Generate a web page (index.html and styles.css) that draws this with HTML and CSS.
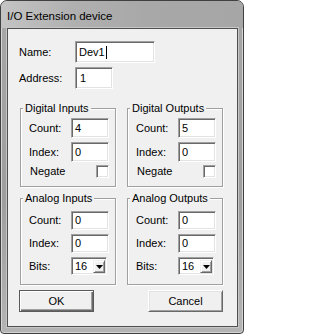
FILE: index.html
```html
<!DOCTYPE html>
<html>
<head>
<meta charset="utf-8">
<title>I/O Extension device</title>
<link rel="stylesheet" href="styles.css">
</head>
<body>
<div class="window">
  <div class="titlebar"><span class="title">I/O Extension device</span></div>
  <div class="client">
    <div class="top-fields">
      <span class="lbl">Name:</span>
      <div class="edit name">Dev1<span class="caret"></span></div>
      <span class="lbl">Address:</span>
      <div class="edit addr">1</div>
    </div>
    <div class="groups">
      <fieldset class="group digital">
        <legend>Digital Inputs</legend>
        <div class="row"><span class="lbl">Count:</span><div class="edit small">4</div></div>
        <div class="row"><span class="lbl">Index:</span><div class="edit small">0</div></div>
        <div class="row check"><span class="lbl neg">Negate</span><div class="checkbox"></div></div>
      </fieldset>
      <fieldset class="group digital">
        <legend>Digital Outputs</legend>
        <div class="row"><span class="lbl">Count:</span><div class="edit small">5</div></div>
        <div class="row"><span class="lbl">Index:</span><div class="edit small">0</div></div>
        <div class="row check"><span class="lbl neg">Negate</span><div class="checkbox"></div></div>
      </fieldset>
      <fieldset class="group analog">
        <legend>Analog Inputs</legend>
        <div class="row"><span class="lbl">Count:</span><div class="edit small">0</div></div>
        <div class="row"><span class="lbl">Index:</span><div class="edit small">0</div></div>
        <div class="row combo-row"><span class="lbl">Bits:</span>
          <div class="combo"><span class="combo-text">16</span><span class="drop"><svg width="7" height="4" viewBox="0 0 7 4"><polygon points="0,0 7,0 3.5,4" fill="#000"/></svg></span></div>
        </div>
      </fieldset>
      <fieldset class="group analog">
        <legend>Analog Outputs</legend>
        <div class="row"><span class="lbl">Count:</span><div class="edit small">0</div></div>
        <div class="row"><span class="lbl">Index:</span><div class="edit small">0</div></div>
        <div class="row combo-row"><span class="lbl">Bits:</span>
          <div class="combo"><span class="combo-text">16</span><span class="drop"><svg width="7" height="4" viewBox="0 0 7 4"><polygon points="0,0 7,0 3.5,4" fill="#000"/></svg></span></div>
        </div>
      </fieldset>
    </div>
    <div class="buttons">
      <div class="btn default">OK</div>
      <div class="btn">Cancel</div>
    </div>
  </div>
</div>
</body>
</html>
```
FILE: styles.css
```css
html, body {
  margin: 0;
  padding: 0;
}
body {
  width: 244px;
  height: 334px;
  overflow: hidden;
  background: #ffffff;
  font-family: "Liberation Sans", Arial, sans-serif;
  font-size: 11px;
  color: #000;
}
.window {
  box-sizing: border-box;
  width: 244px;
  height: 334px;
  border: 1px solid #404040;
  border-radius: 7px 7px 4px 4px;
  background: linear-gradient(to bottom, #b0b0b0 0px, #a6a6a6 28px, #9e9e9e 60%, #b4b4b4 100%);
  box-shadow: inset 0 0 0 1px #d4d4d4;
  display: flex;
  flex-direction: column;
  padding: 0 5px 6px 6px;
  overflow: hidden;
}
.titlebar {
  height: 27px;
  flex: none;
  box-sizing: border-box;
  display: flex;
  align-items: center;
  padding: 2px 0 0 0;
  margin: 0 -5px 0 -6px;
  padding-left: 6px;
  background: linear-gradient(to right, #c4c4c4 0%, #b0b0b0 30%, #a8a8a8 60%, #a6a6a6 100%);
  border-radius: 6px 6px 0 0;
}
.title {
  font-size: 11.5px;
  line-height: 14px;
  color: #000;
}
.client {
  flex: 1;
  border: 1px solid #505050;
  background: #f0f0f0;
  box-shadow: 0 0 0 1px #c6c6c6;
  display: flex;
  flex-direction: column;
  min-height: 0;
}
.top-fields {
  display: grid;
  grid-template-columns: 56px auto;
  grid-template-rows: 22px 22px;
  row-gap: 4px;
  align-items: center;
  justify-items: start;
  margin: 12px 0 0 11px;
}
.lbl {
  line-height: 13px;
  white-space: nowrap;
}
.edit {
  box-sizing: border-box;
  background: #fff;
  border: 1px solid;
  border-color: #a0a0a0 #ffffff #ffffff #a0a0a0;
  box-shadow: inset 1px 1px 0 #696969, inset -1px -1px 0 #e3e3e3;
  display: flex;
  align-items: center;
  padding-left: 3px;
  line-height: 13px;
}
.name {
  width: 80px;
  height: 22px;
}
.addr {
  width: 38px;
  height: 22px;
  padding-left: 4px;
}
.caret {
  display: inline-block;
  width: 1px;
  height: 13px;
  background: #000;
  margin-left: 1px;
}
.groups {
  display: grid;
  grid-template-columns: 96px 96px;
  column-gap: 11px;
  row-gap: 5px;
  margin: 13px 0 0 12px;
}
.group {
  margin: 0;
  min-width: 0;
  box-sizing: border-box;
  border: 1px solid #a0a0a0;
  box-shadow: 1px 1px 0 #ffffff, inset 1px 1px 0 #ffffff;
  padding: 3px 6px 8px 8px;
  display: flex;
  flex-direction: column;
  gap: 4px;
}
.group legend {
  padding: 0 2px;
  margin-left: -6px;
  line-height: 13px;
  background: #f0f0f0;
}
.group.analog {
  padding-top: 6px;
  padding-bottom: 9px;
}
.row {
  display: flex;
  align-items: center;
  height: 20px;
}
.row .lbl {
  width: 42px;
  flex: none;
}
.small {
  width: 38px;
  height: 20px;
}
.analog .small {
  height: 19px;
}
.analog .row {
  height: 19px;
}
.row.check {
  height: 13px;
  margin-top: -1px;
}
.lbl.neg {
  margin-left: 1px;
  width: 41px;
}
.checkbox {
  box-sizing: border-box;
  width: 13px;
  height: 13px;
  margin-left: auto;
  margin-right: 0;
  background: #fff;
  border: 1px solid;
  border-color: #a0a0a0 #ffffff #ffffff #a0a0a0;
  box-shadow: inset 1px 1px 0 #696969, inset -1px -1px 0 #e3e3e3;
}
.row.check {
  width: 80px;
}
.row.combo-row {
  height: 18px;
}
.combo {
  box-sizing: border-box;
  width: 36px;
  height: 18px;
  background: #fff;
  border: 1px solid;
  border-color: #a0a0a0 #ffffff #ffffff #a0a0a0;
  box-shadow: inset 1px 1px 0 #696969, inset -1px -1px 0 #e3e3e3;
  display: flex;
  align-items: stretch;
  padding: 2px 1px 1px 2px;
}
.combo-text {
  flex: 1;
  display: flex;
  align-items: center;
  padding-left: 1px;
  line-height: 13px;
}
.drop {
  box-sizing: border-box;
  width: 12px;
  flex: none;
  background: #f0f0f0;
  border: 1px solid;
  border-color: #f0f0f0 #696969 #696969 #f0f0f0;
  box-shadow: inset 1px 1px 0 #ffffff, inset -1px -1px 0 #a0a0a0;
  display: flex;
  align-items: center;
  justify-content: center;
}
.drop svg {
  display: block;
}
.buttons {
  display: flex;
  gap: 54px;
  margin: 5px 0 0 11px;
}
.btn {
  box-sizing: border-box;
  width: 75px;
  height: 22px;
  background: #f0f0f0;
  border: 1px solid;
  border-color: #ffffff #696969 #696969 #ffffff;
  box-shadow: inset 1px 1px 0 #e3e3e3, inset -1px -1px 0 #a0a0a0;
  display: flex;
  align-items: center;
  justify-content: center;
  line-height: 13px;
}
.btn.default {
  border-color: #5a5a5a;
  box-shadow: inset 1px 1px 0 #ffffff, inset -1px -1px 0 #696969, inset -2px -2px 0 #a0a0a0;
}
```
